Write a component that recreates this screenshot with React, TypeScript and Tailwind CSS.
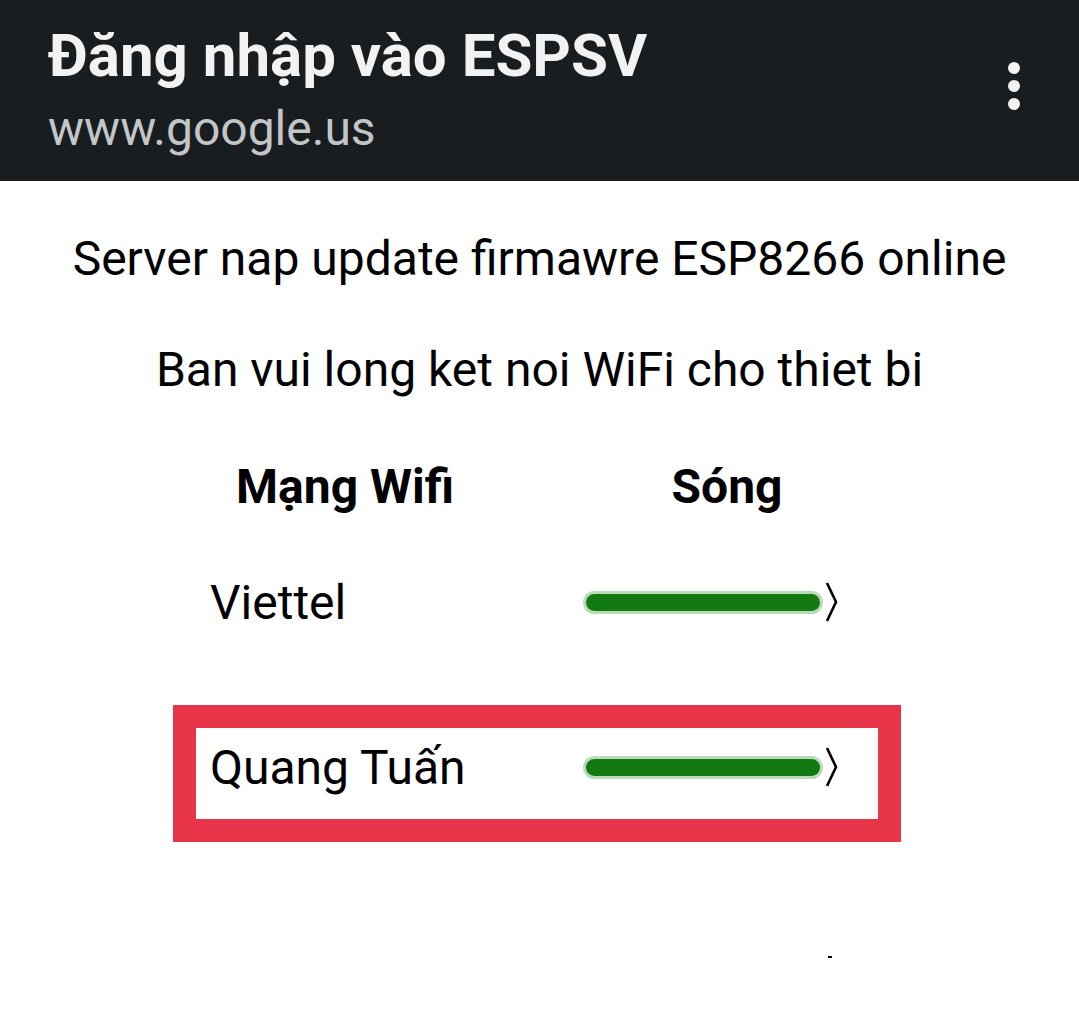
const networks = [
  { name: 'Viettel', boxed: false },
  { name: 'Quang Tuấn', boxed: true },
]

function Signal() {
  return (
    <div className="flex items-center">
      <div className="w-[240px] h-[23px] rounded-full bg-[#b9dbb9] p-[3px]">
        <div className="h-full w-full rounded-full bg-[#137912]" />
      </div>
      <svg width="14" height="40" viewBox="0 0 14 40" className="ml-[2px] -mt-[2px]">
        <polyline points="2,1 11,20 2,39" fill="none" stroke="#000" strokeWidth="2.6" />
      </svg>
    </div>
  )
}

export default function App() {
  return (
    <div className="w-[1079px] h-[1036px] bg-white overflow-hidden font-['Roboto',sans-serif] text-black">
      <header className="h-[181px] bg-[#1a1d20] flex items-start justify-between pl-[48px] pr-[59px]">
        <div className="pt-[20px]">
          <h1 className="text-[60px] font-bold leading-[1.2] text-[#f1f2f3]">Đăng nhập vào ESPSV</h1>
          <p className="text-[48px] leading-[1.2] text-[#c3c6c9] mt-[8px]">www.google.us</p>
        </div>
        <div className="pt-[62px] flex flex-col gap-[6px]">
          <span className="w-[12px] h-[12px] rounded-full bg-[#f1f2f3]" />
          <span className="w-[12px] h-[12px] rounded-full bg-[#f1f2f3]" />
          <span className="w-[12px] h-[12px] rounded-full bg-[#f1f2f3]" />
        </div>
      </header>

      <main className="flex flex-col items-center">
        <p className="mt-[49px] text-[48px] leading-[1.2]">Server nap update firmawre ESP8266 online</p>
        <p className="mt-[53px] text-[48px] leading-[1.2]">Ban vui long ket noi WiFi cho thiet bi</p>

        <div className="self-start ml-[173px] w-[728px] mt-[61px]">
          <div className="flex text-[48px] font-bold leading-[1.15]">
            <span className="w-[344px] text-center">Mạng Wifi</span>
            <span className="w-[250px] ml-[85px] text-center">Sóng</span>
          </div>

          {networks.map((n, i) => (
            <div
              key={n.name}
              className={`h-[137px] border-[23px] flex items-center pl-[14px] pb-[12px] ${
                n.boxed ? 'border-[#e8354a]' : 'border-transparent'
              } ${i === 0 ? 'mt-[26px]' : 'mt-[28px]'}`}
            >
              <span className="w-[373px] text-[48px] leading-[1.2]">{n.name}</span>
              <Signal />
            </div>
          ))}

          <div className="ml-[655px] mt-[114px] w-[4px] h-[2px] bg-black" />
        </div>
      </main>
    </div>
  )
}
